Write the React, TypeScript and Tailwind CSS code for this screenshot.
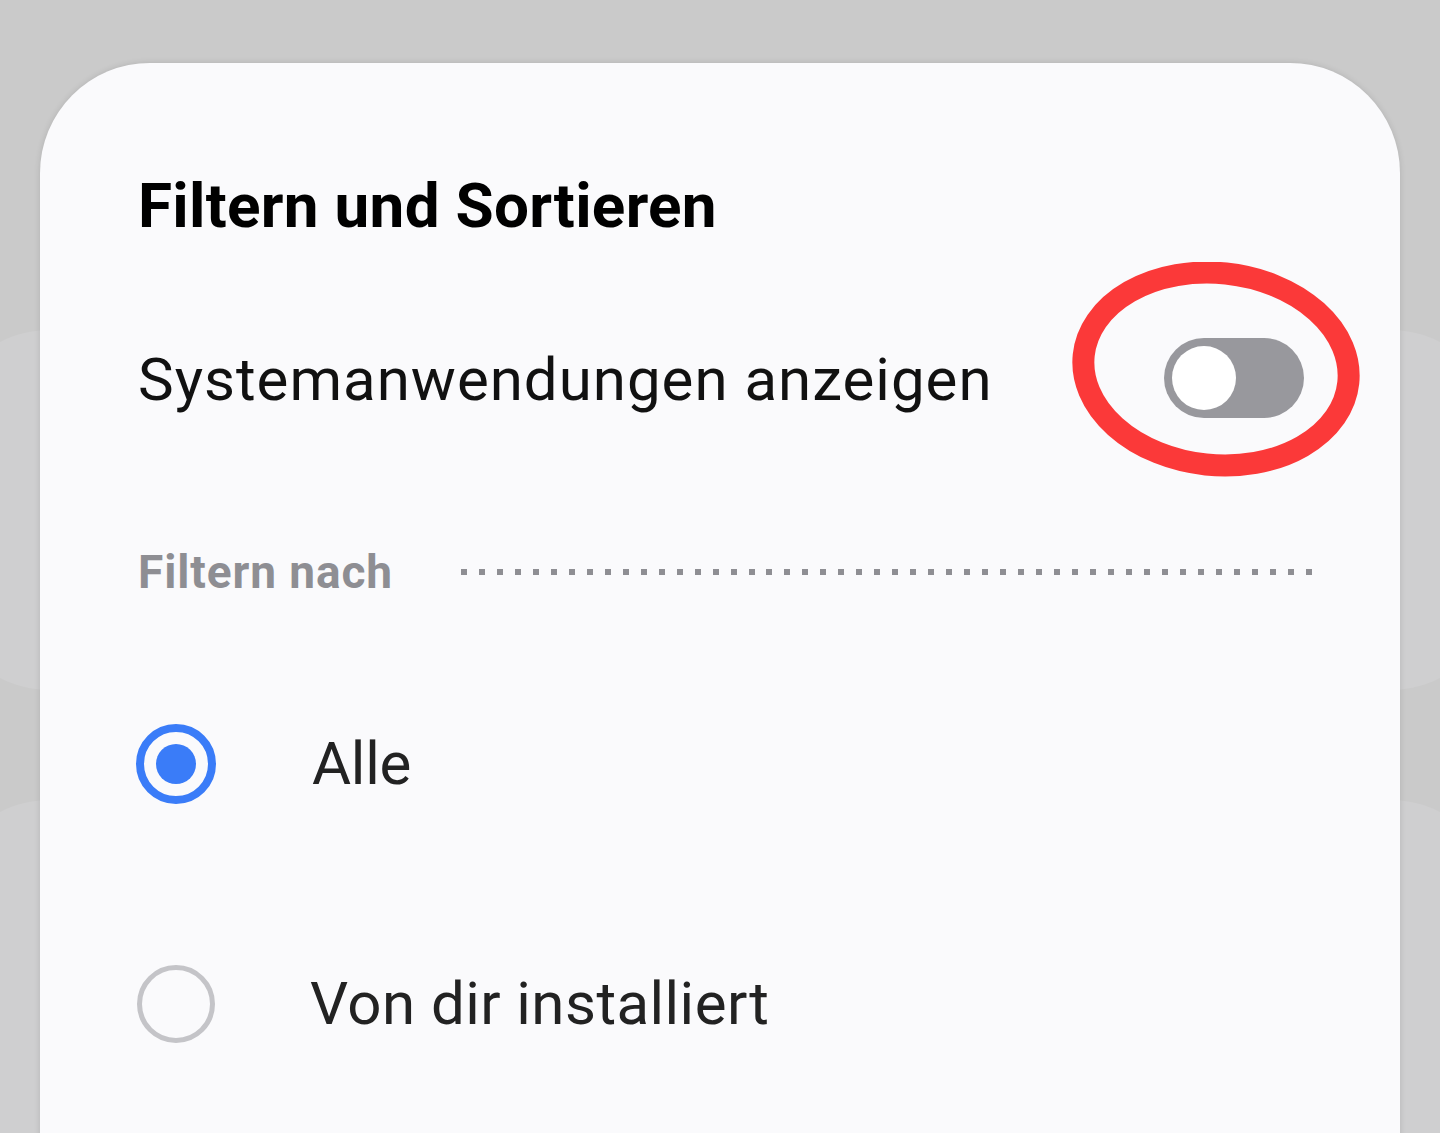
import React from "react";

const Radio = ({ checked }: { checked: boolean }) =>
  checked ? (
    <div className="w-[80px] h-[80px] rounded-full border-[8px] border-[#3a7cf8] flex items-center justify-center">
      <div className="w-[40px] h-[40px] rounded-full bg-[#3a7cf8]" />
    </div>
  ) : (
    <div className="w-[78px] h-[78px] rounded-full border-[5px] border-[#c4c4c8]" />
  );

export default function App() {
  return (
    <div
      className="relative w-[1440px] h-[1133px] overflow-hidden bg-[#cacaca]"
      style={{ fontFamily: "Roboto, 'Noto Sans', sans-serif" }}
    >
      {/* faint cards of the screen behind */}
      <div className="absolute left-[-60px] right-[-60px] top-[330px] h-[360px] rounded-[110px] bg-[#cfcfd0]" />
      <div className="absolute left-[-60px] right-[-60px] top-[800px] h-[400px] rounded-[110px] bg-[#cfcfd0]" />

      <div className="relative mx-[40px] mt-[63px] h-[1200px] rounded-t-[110px] bg-[#fafafc] shadow-[0_0_6px_rgba(0,0,0,0.12)] pt-[87px] pl-[96px] pr-[96px]">
        <div className="h-[110px] flex items-center pl-[2px]">
          <h1 className="text-[62px] font-bold text-black tracking-[0.3px]">Filtern und Sortieren</h1>
        </div>

        <div className="relative h-[240px] flex items-center justify-between pl-[2px]">
          <span className="text-[60px] text-[#111] tracking-[1px]">Systemanwendungen anzeigen</span>
          <div className="w-[140px] h-[80px] rounded-full bg-[#98989d] flex items-center pl-[8px] -mt-[4px]">
            <div className="w-[64px] h-[64px] rounded-full bg-white" />
          </div>
          <div className="absolute right-[-68px] top-[2px]">
            <svg width="300" height="230" viewBox="0 0 300 230" className="pointer-events-none">
              <ellipse
                cx="144"
                cy="107"
                rx="133"
                ry="96"
                transform="rotate(6 144 107)"
                fill="none"
                stroke="#fb3939"
                strokeWidth="22"
              />
            </svg>
          </div>
        </div>

        <div className="h-[144px] flex items-center pl-[2px]">
          <span className="text-[46px] font-bold text-[#8e8e93] tracking-[0.9px]">Filtern nach</span>
          <div className="ml-[68px] mr-[-8px] flex-1 flex justify-between">
            {Array.from({ length: 48 }).map((_, i) => (
              <div key={i} className="w-[6px] h-[6px] bg-[#8e8e93]" />
            ))}
          </div>
        </div>

        <div className="h-[240px] flex items-center">
          <Radio checked />
          <span className="ml-[96px] text-[60px] text-[#222] tracking-[-0.3px]">Alle</span>
        </div>

        <div className="h-[240px] flex items-center">
          <div className="ml-[1px]">
            <Radio checked={false} />
          </div>
          <span className="ml-[95px] text-[60px] text-[#222] tracking-[0.45px]">Von dir installiert</span>
        </div>
      </div>
    </div>
  );
}
